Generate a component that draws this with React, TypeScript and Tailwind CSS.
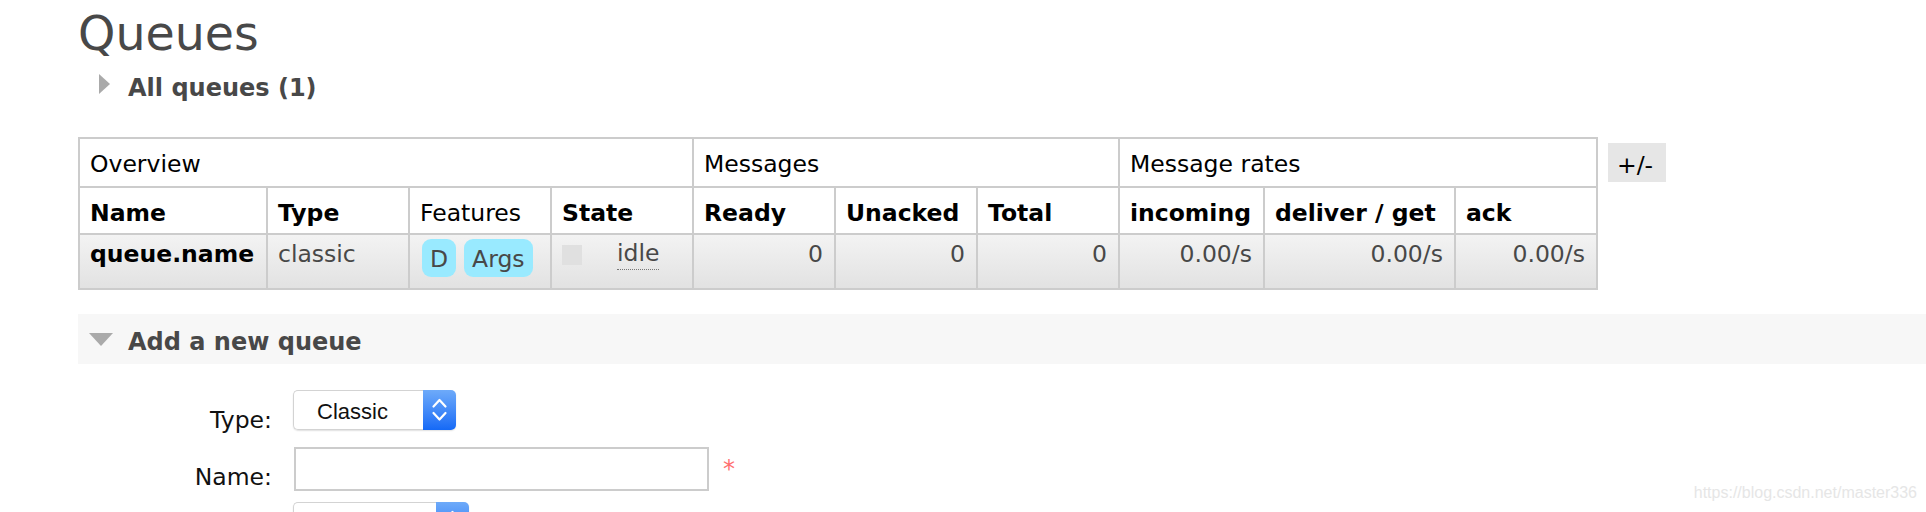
import React from "react";

function Stepper() {
  return (
    <div className="h-full w-[33px] shrink-0 rounded-r-[5px] bg-linear-to-b from-[#6eaaf9] to-[#1469f6]">
      <svg width="33" height="40" viewBox="0 0 33 40">
        <path d="M10.5 16.5 L16.5 10 L22.5 16.5" stroke="white" strokeWidth="2.2" fill="none" strokeLinecap="round" strokeLinejoin="round" />
        <path d="M10.5 23 L16.5 29.5 L22.5 23" stroke="white" strokeWidth="2.2" fill="none" strokeLinecap="round" strokeLinejoin="round" />
      </svg>
    </div>
  );
}

function Select({ className, label }: { className: string; label?: string }) {
  return (
    <div className={`flex h-[40px] shrink-0 rounded-[5px] shadow-[0_1px_1.5px_rgba(0,0,0,0.12)] ${className}`}>
      <div className="flex-1 rounded-l-[5px] border-y border-l border-[#d3d3d3] bg-white pl-[23px] pt-[9px] font-['Liberation_Sans',Arial,sans-serif] text-[22px] leading-[24px] text-[#111]">
        {label}
      </div>
      <Stepper />
    </div>
  );
}

const headCell = "bg-white pl-[10px] pt-[11px] leading-[28px] text-black";
const dataCell = "bg-linear-to-b from-[#f3f3f3] to-[#e2e2e2] pt-[5px] leading-[28px] text-[#484848]";

export default function App() {
  const numCells = ["0", "0", "0", "0.00/s", "0.00/s", "0.00/s"];
  return (
    <div className="relative h-[512px] w-full overflow-hidden bg-white font-['DejaVu_Sans',Verdana,sans-serif] text-[23.5px]">
      <div className="pl-[78px]">
        <h1 className="mt-[10px] text-[47.5px] leading-[47px] font-normal text-[#484848]">Queues</h1>

        <div className="mt-[17px] flex items-start pl-[21px]">
          <div className="h-0 w-0 border-y-[10px] border-l-[11px] border-y-transparent border-l-[#aaaaaa]" />
          <h2 className="ml-[18px] text-[24px] leading-[28px] font-bold text-[#484848]">All queues (1)</h2>
        </div>

        <div className="mt-[35px] flex items-start gap-[10px]">
          <div className="grid w-[1520px] grid-cols-[186px_140px_140px_140px_140px_140px_140px_143px_189px_140px] grid-rows-[47px_45px_53px] gap-[2px] bg-[#cccccc] p-[2px]">
            <div className={`${headCell} col-span-4`}>Overview</div>
            <div className={`${headCell} col-span-3`}>Messages</div>
            <div className={`${headCell} col-span-3`}>Message rates</div>

            <div className={`${headCell} font-bold`}>Name</div>
            <div className={`${headCell} font-bold`}>Type</div>
            <div className={headCell}>Features</div>
            <div className={`${headCell} font-bold`}>State</div>
            <div className={`${headCell} font-bold`}>Ready</div>
            <div className={`${headCell} font-bold`}>Unacked</div>
            <div className={`${headCell} font-bold`}>Total</div>
            <div className={`${headCell} font-bold`}>incoming</div>
            <div className={`${headCell} font-bold`}>deliver / get</div>
            <div className={`${headCell} font-bold`}>ack</div>

            <div className={`${dataCell} pl-[10px] font-bold text-black`}>queue.name</div>
            <div className={`${dataCell} pl-[10px]`}>classic</div>
            <div className="flex items-start gap-[8px] bg-linear-to-b from-[#f3f3f3] to-[#e2e2e2] pl-[12px] pt-[4px] text-[#484848]">
              <span className="h-[38px] rounded-[9px] bg-[#99eaff] px-[8px] pt-[2px] leading-[36px]">D</span>
              <span className="h-[38px] rounded-[9px] bg-[#99eaff] px-[8px] pt-[2px] leading-[36px]">Args</span>
            </div>
            <div className={`${dataCell} flex items-start`}>
              <span className="ml-[10px] mt-[5px] h-[20px] w-[20px] bg-[#e0e0e0]" />
              <span className="ml-[35px] border-b border-dotted border-[#777] pb-[2px] leading-[27px]">idle</span>
            </div>
            {numCells.map((v, i) => (
              <div key={i} className={`${dataCell} pr-[11px] text-right`}>
                {v}
              </div>
            ))}
          </div>
          <button className="mt-[6px] h-[39px] w-[58px] bg-[#e6e6e6] pl-[9px] pt-[5px] text-left leading-[28px] text-black">
            +/-
          </button>
        </div>

        <div className="mt-[24px] flex h-[50px] items-start bg-[#f7f7f7]">
          <div className="ml-[11px] mt-[19px] h-0 w-0 border-x-[12px] border-t-[13px] border-x-transparent border-t-[#aaaaaa]" />
          <h2 className="ml-[15px] mt-[14px] text-[24px] leading-[28px] font-bold text-[#484848]">Add a new queue</h2>
        </div>

        <div className="mt-[26px] flex h-[40px] items-start">
          <label className="mt-[18px] w-[194px] shrink-0 text-right leading-[24px] text-[#111]">Type:</label>
          <Select className="ml-[21px] w-[163px]" label="Classic" />
        </div>

        <div className="mt-[17px] flex h-[44px] items-start">
          <label className="mt-[18px] w-[194px] shrink-0 text-right leading-[24px] text-[#111]">Name:</label>
          <input className="ml-[22px] h-[44px] w-[415px] shrink-0 border-2 border-[#cccccc] bg-white outline-none" />
          <span className="ml-[14px] mt-[8px] text-[24px] leading-[28px] text-[#ff6f6f]">*</span>
        </div>

        <div className="mt-[11px] flex h-[40px] items-start">
          <div className="w-[194px] shrink-0" />
          <Select className="ml-[21px] w-[176px]" />
        </div>
      </div>

      <span className="absolute right-[9px] top-[485px] font-['Liberation_Sans',Arial,sans-serif] text-[16px] leading-[16px] text-[#e6e6e6]">
        https://blog.csdn.net/master336
      </span>
    </div>
  );
}
